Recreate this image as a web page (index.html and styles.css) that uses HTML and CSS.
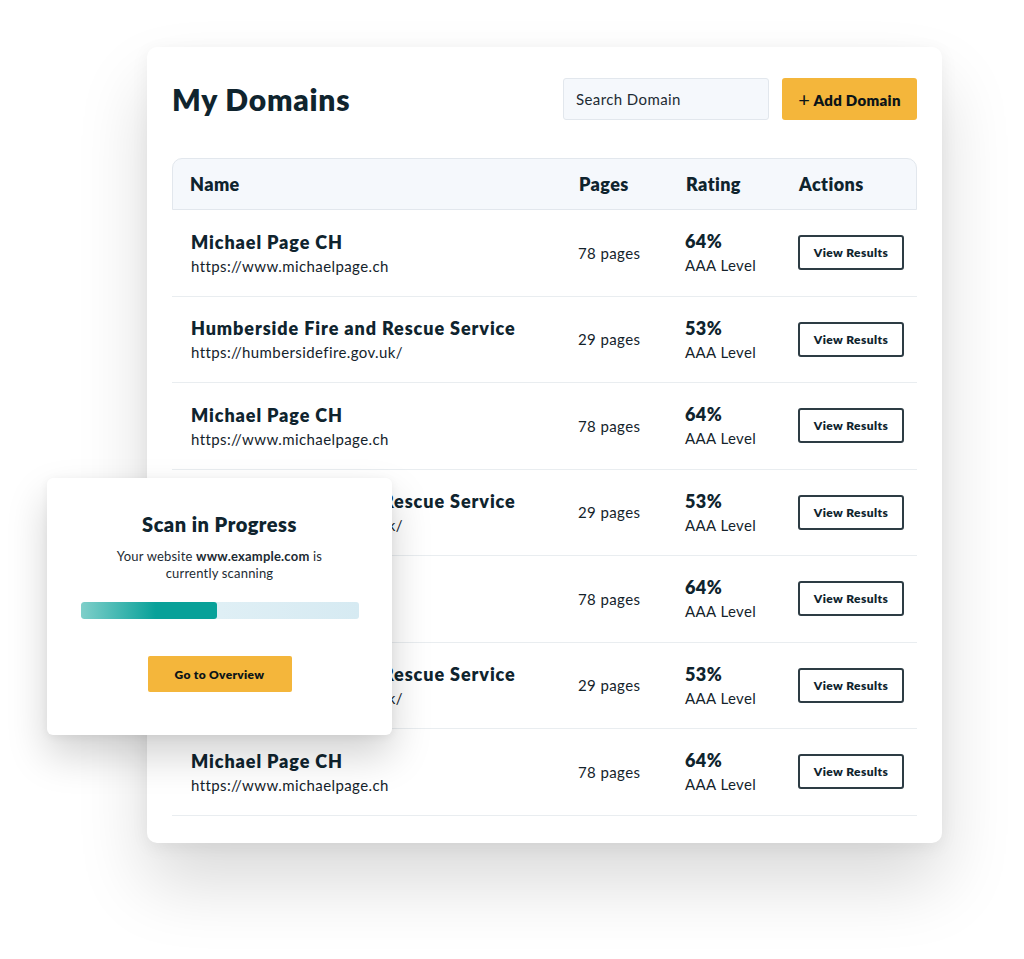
FILE: index.html
```html
<!DOCTYPE html>
<html lang="en">
  <head>
    <meta charset="UTF-8" />
    <meta name="viewport" content="width=device-width, initial-scale=1.0" />
    <title>My Domains</title>
    <link rel="stylesheet" href="styles.css">
  </head>
  <body>
    <div class="stage">
      <div class="card">
        <div class="top">
          <h1>My Domains</h1>
          <div class="tools">
            <input class="search" type="text" placeholder="Search Domain" />
            <button class="add"><span class="plus">+</span> Add Domain</button>
          </div>
        </div>

        <div class="table">
          <div class="row head">
            <div class="cell">Name</div>
            <div class="cell">Pages</div>
            <div class="cell">Rating</div>
            <div class="cell">Actions</div>
          </div>

          <div class="row">
            <div class="cell"><p class="site">Michael Page CH</p><p class="url">https://www.michaelpage.ch</p></div>
            <div class="cell pages">78 pages</div>
            <div class="cell"><p class="pct">64%</p><p class="level">AAA Level</p></div>
            <div class="cell"><button class="view">View Results</button></div>
          </div>
          <div class="row">
            <div class="cell"><p class="site">Humberside Fire and Rescue Service</p><p class="url">https://humbersidefire.gov.uk/</p></div>
            <div class="cell pages">29 pages</div>
            <div class="cell"><p class="pct">53%</p><p class="level">AAA Level</p></div>
            <div class="cell"><button class="view">View Results</button></div>
          </div>
          <div class="row">
            <div class="cell"><p class="site">Michael Page CH</p><p class="url">https://www.michaelpage.ch</p></div>
            <div class="cell pages">78 pages</div>
            <div class="cell"><p class="pct">64%</p><p class="level">AAA Level</p></div>
            <div class="cell"><button class="view">View Results</button></div>
          </div>
          <div class="row">
            <div class="cell"><p class="site">Humberside Fire and Rescue Service</p><p class="url">https://humbersidefire.gov.uk/</p></div>
            <div class="cell pages">29 pages</div>
            <div class="cell"><p class="pct">53%</p><p class="level">AAA Level</p></div>
            <div class="cell"><button class="view">View Results</button></div>
          </div>
          <div class="row">
            <div class="cell"><p class="site">Michael Page CH</p><p class="url">https://www.michaelpage.ch</p></div>
            <div class="cell pages">78 pages</div>
            <div class="cell"><p class="pct">64%</p><p class="level">AAA Level</p></div>
            <div class="cell"><button class="view">View Results</button></div>
          </div>
          <div class="row">
            <div class="cell"><p class="site">Humberside Fire and Rescue Service</p><p class="url">https://humbersidefire.gov.uk/</p></div>
            <div class="cell pages">29 pages</div>
            <div class="cell"><p class="pct">53%</p><p class="level">AAA Level</p></div>
            <div class="cell"><button class="view">View Results</button></div>
          </div>
          <div class="row">
            <div class="cell"><p class="site">Michael Page CH</p><p class="url">https://www.michaelpage.ch</p></div>
            <div class="cell pages">78 pages</div>
            <div class="cell"><p class="pct">64%</p><p class="level">AAA Level</p></div>
            <div class="cell"><button class="view">View Results</button></div>
          </div>
        </div>
      </div>

      <div class="modal">
        <h2>Scan in Progress</h2>
        <p class="msg">Your website <b>www.example.com</b> is<br />currently scanning</p>
        <div class="bar"><div class="fill" style="width: 49%"></div></div>
        <button class="overview">Go to Overview</button>
      </div>
    </div>
  </body>
</html>
```

FILE: styles.css
```css
* {
  margin: 0;
  padding: 0;
  box-sizing: border-box;
}

body {
  width: 100%;
  height: 100vh;
  background: #fff;
  font-family: 'Lato', 'Noto Sans', sans-serif;
  color: #0f242e;
  overflow: hidden;
}

.stage {
  position: relative;
  padding: 47px 0 0 147px;
}

.card {
  width: 795px;
  padding: 31px 25px 27px;
  background: #fff;
  border-radius: 10px;
  box-shadow: 0 40px 70px rgba(0, 0, 0, 0.15), 0 4px 18px rgba(0, 0, 0, 0.06);
}

.top {
  display: flex;
  justify-content: space-between;
  align-items: center;
  margin-bottom: 38px;
}

h1 {
  font-size: 30px;
  font-weight: 800;
  letter-spacing: 0.8px;
}

.tools {
  display: flex;
  gap: 13px;
}

.search {
  width: 206px;
  height: 42px;
  padding: 0 12px;
  border: 1px solid #e2e7ed;
  border-radius: 3px;
  background: #f5f8fc;
  font-family: inherit;
  font-size: 15px;
  letter-spacing: 0.4px;
  color: #0f242e;
}

.search::placeholder {
  color: #1d2b33;
}

.add {
  width: 135px;
  height: 42px;
  border: none;
  border-radius: 3px;
  background: #f4b63b;
  font-family: inherit;
  font-size: 15px;
  font-weight: 800;
  letter-spacing: 0.3px;
  color: #0b1418;
}

.plus {
  font-weight: 400;
  font-size: 20px;
  vertical-align: -1px;
}

.row {
  display: grid;
  grid-template-columns: 388px 107px 113px 137px;
  align-items: center;
  height: 86.5px;
  border-bottom: 1px solid #e9edf0;
}

.cell {
  padding-left: 18px;
}

.head {
  height: 52px;
  background: #f5f8fc;
  border: 1px solid #e2e7ed;
  border-radius: 10px 10px 0 0;
  font-size: 18px;
  font-weight: 800;
  letter-spacing: 0.4px;
}

.head .cell:first-child {
  padding-left: 17px;
}

.site {
  padding-left: 1px;
  font-size: 18px;
  font-weight: 800;
  letter-spacing: 0.9px;
  margin-bottom: 4px;
}

.url,
.pages,
.level {
  font-size: 15px;
  letter-spacing: 0.4px;
  color: #14232b;
}

.url {
  padding-left: 1px;
}

.pct {
  font-size: 18px;
  font-weight: 800;
  letter-spacing: 0.4px;
  margin-top: -1px;
  margin-bottom: 4px;
}

.view {
  width: 106px;
  height: 35px;
  background: #fff;
  border: 2px solid #2d3c44;
  border-radius: 3px;
  font-family: inherit;
  font-size: 12px;
  font-weight: 800;
  letter-spacing: 0.4px;
  color: #0f242e;
}

.modal {
  position: absolute;
  left: 47px;
  top: 478px;
  width: 345px;
  height: 257px;
  padding-top: 34px;
  background: #fff;
  border-radius: 6px;
  text-align: center;
  box-shadow: 0 20px 40px rgba(0, 0, 0, 0.18), 0 2px 10px rgba(0, 0, 0, 0.06);
}

h2 {
  font-size: 20px;
  font-weight: 800;
  letter-spacing: 0.5px;
  margin-bottom: 12px;
}

.msg {
  font-size: 13px;
  line-height: 17px;
  letter-spacing: 0.2px;
  color: #1d2b33;
}

.bar {
  width: 278px;
  height: 17px;
  margin: 20px auto 37px;
  border-radius: 3px;
  background: linear-gradient(90deg, #e8f4f8, #d6eaf2);
  overflow: hidden;
}

.fill {
  height: 100%;
  border-radius: 3px;
  background: linear-gradient(90deg, #7fcfca, #08a199 55%);
}

.overview {
  width: 144px;
  height: 36px;
  border: none;
  border-radius: 2px;
  background: #f4b63b;
  font-family: inherit;
  font-size: 12px;
  font-weight: 800;
  letter-spacing: 0.3px;
  color: #0b1418;
}
```
